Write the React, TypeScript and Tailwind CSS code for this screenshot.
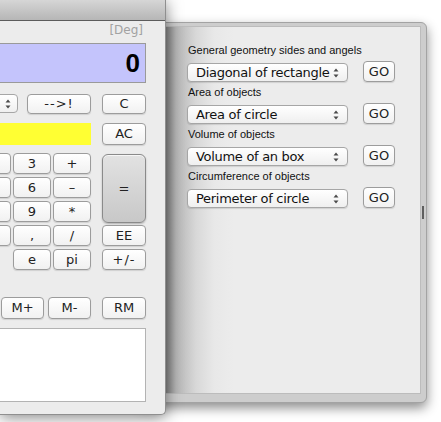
import React from "react";

const btn =
  "flex items-center justify-center rounded-[4px] border border-[#9c9c9c] bg-gradient-to-b from-white to-[#f1f1f1] text-[13px] text-[#222] shadow-[0_1px_1px_rgba(0,0,0,0.12)] font-['DejaVu_Sans',sans-serif]";

const Arrows = () => (
  <svg width="6" height="10" viewBox="0 0 6 10" className="shrink-0">
    <path d="M3 0.5 L5.5 3.5 L0.5 3.5 Z" fill="#4a4a4a" />
    <path d="M3 9.5 L5.5 6.5 L0.5 6.5 Z" fill="#4a4a4a" />
  </svg>
);

type PopupProps = { label: string };

const Popup = ({ label }: PopupProps) => (
  <div className="mt-[2px] flex h-[19px] w-[161px] items-center justify-between rounded-[4px] border border-[#a6a6a6] bg-gradient-to-b from-white to-[#efefef] pl-[8px] pr-[8px] shadow-[0_1px_1px_rgba(0,0,0,0.12)]">
    <span className="text-[13px] leading-[17px] tracking-[-0.3px] text-[#111] font-['DejaVu_Sans',sans-serif] whitespace-nowrap">
      {label}
    </span>
    <Arrows />
  </div>
);

const groups = [
  { title: "General geometry sides and angels", item: "Diagonal of rectangle" },
  { title: "Area of objects", item: "Area of circle" },
  { title: "Volume of objects", item: "Volume of an box" },
  { title: "Circumference of objects", item: "Perimeter of circle" },
];

// keypad rows: left column is cut off by the window edge, so no labels there
const keys = [
  ["_", "3", "+"],
  ["_", "6", "–"],
  ["_", "9", "*"],
  ["_", ",", "/"],
  ["", "e", "pi"],
];

const Drawer = () => (
  <div className="absolute left-[140px] top-[22px] h-[381px] w-[287px] rounded-r-[6px] border border-[#a3a3a3] bg-[#cdcdcd] pt-[3px] pr-[5px] pb-[8px] shadow-[0_5px_12px_rgba(0,0,0,0.45)]">
    <div className="relative h-full w-full border border-[#bcbcbc] bg-[linear-gradient(to_right,#8a8a8a_24px,#b5b5b5_34px,#d8d8d8_54px,#e8e8e8_72px,#ececec_92px)] pl-[46px] pt-[18px]">
      {groups.map((g, i) => (
        <div key={g.title} className={i === 0 ? "" : "mt-[5px]"}>
          <p className="h-[14px] text-[11px] leading-[10px] text-[#111] font-['Liberation_Sans',Arial,sans-serif]">
            {g.title}
          </p>
          <div className="mt-[2px] flex h-[21px] items-start -ml-[1px]">
            <Popup label={g.item} />
            <button className={`${btn} ml-[15px] h-[21px] w-[32px]`}>GO</button>
          </div>
        </div>
      ))}
    </div>
    {/* resize handle */}
    <div className="absolute right-[2px] top-[183px] h-[13px] w-[2px] bg-[#5f5f5f]" />
  </div>
);

const Calculator = () => (
  <div className="absolute left-0 top-0 h-[415px] w-[166px] overflow-hidden rounded-br-[5px] border-r border-b border-[#8f8f8f] bg-[#ececec] shadow-[0_2px_16px_rgba(0,0,0,0.5)]">
    <div className="h-[20px] bg-gradient-to-b from-[#d6d6d6] to-[#b6b6b6]" />
    <div className="h-[1px] bg-[#5c5c5c]" />
    <div className="-ml-[60px] w-[206px]">
      <div className="mt-[2px] h-[14px] pr-[3px] text-right text-[12px] leading-[14px] text-[#a2a2a2] font-['DejaVu_Sans',sans-serif]">
        [Deg]
      </div>
      <div className="mt-[6px] flex h-[40px] items-center justify-end border border-[#9a9a9a] bg-[#c4c4fc] pr-[5px]">
        <span className="text-[26px] font-bold leading-none text-black font-['Liberation_Sans',Arial,sans-serif]">
          0
        </span>
      </div>

      <div className="mt-[11px] flex gap-[11px]">
        <div className="w-[151px]">
          <div className="flex h-[20px] gap-[9px]">
            <div className="flex h-[19px] w-[78px] items-center justify-end rounded-[4px] border border-[#a6a6a6] bg-gradient-to-b from-white to-[#efefef] pr-[6px]">
              <Arrows />
            </div>
            <button className={`${btn} h-[20px] w-[64px] tracking-[1px]`}>--&gt;!</button>
          </div>
          <div className="mt-[9px] h-[22px] bg-[#ffff33]" />
          <div className="mt-[8px] grid grid-cols-[38px_38px_38px] justify-end gap-x-[2px] gap-y-[3px]">
            {keys.flat().map((k, i) =>
              k === "" ? (
                <div key={i} className="h-[21px]" />
              ) : k === "_" ? (
                <div key={i} className={`${btn} h-[21px]`} />
              ) : (
                <button key={i} className={`${btn} h-[21px]`}>
                  {k}
                </button>
              )
            )}
          </div>
        </div>

        <div className="flex w-[44px] flex-col">
          <button className={`${btn} h-[20px]`}>C</button>
          <button className={`${btn} mt-[9px] h-[22px]`}>AC</button>
          <button className="mt-[9px] flex h-[69px] items-center justify-center rounded-[6px] border border-[#8a8a8a] bg-gradient-to-b from-[#e2e2e2] to-[#c8c8c8] text-[13px] text-[#222] shadow-[inset_0_1px_0_rgba(255,255,255,0.7),0_1px_2px_rgba(0,0,0,0.25)] font-['DejaVu_Sans',sans-serif]">
            =
          </button>
          <button className={`${btn} mt-[2px] h-[21px]`}>EE</button>
          <button className={`${btn} mt-[3px] h-[21px] tracking-[1px]`}>+/-</button>
        </div>
      </div>

      <div className="mt-[27px] flex gap-[11px]">
        <div className="flex w-[151px] justify-end gap-[4px]">
          <div className={`${btn} h-[22px] w-[43px]`} />
          <button className={`${btn} h-[22px] w-[43px]`}>M+</button>
          <button className={`${btn} h-[22px] w-[43px]`}>M-</button>
        </div>
        <button className={`${btn} h-[22px] w-[44px]`}>RM</button>
      </div>

      <div className="mt-[9px] h-[74px] border border-[#b3b3b3] bg-white" />
    </div>
  </div>
);

export default function App() {
  return (
    <div className="relative h-[422px] w-[441px] overflow-hidden bg-white">
      <Drawer />
      <Calculator />
    </div>
  );
}
